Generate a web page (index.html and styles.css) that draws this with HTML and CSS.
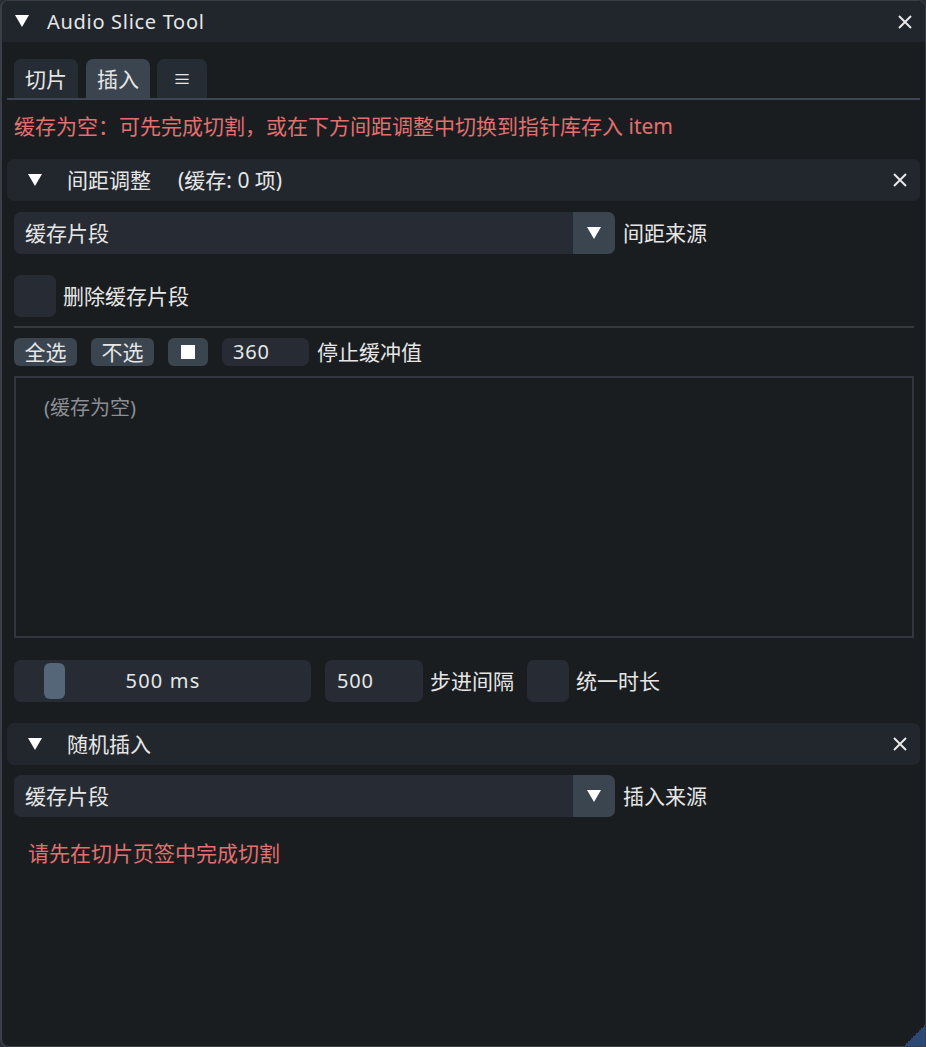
FILE: index.html
```html
<!DOCTYPE html>
<html>
<head>
<meta charset="utf-8">
<link rel="stylesheet" href="styles.css">
</head>
<body>
<div class="window">
  <div class="titlebar">
    <svg class="tri" width="14" height="12" viewBox="0 0 14 12"><polygon points="0,0 14,0 7,12" fill="#ffffff"/></svg>
    <span class="title">Audio Slice Tool</span>
    <svg class="close" width="14" height="14" viewBox="0 0 14 14"><path d="M1 1 L13 13 M13 1 L1 13" stroke="#e8e8e8" stroke-width="2"/></svg>
  </div>
  <div class="content">
    <div class="tabbar">
      <div class="tab">切片</div>
      <div class="tab active">插入</div>
      <div class="tab menu">≡</div>
    </div>
    <p class="warn top-warn">缓存为空：可先完成切割，或在下方间距调整中切换到指针库存入 item</p>

    <div class="header">
      <svg class="tri" width="14" height="12" viewBox="0 0 14 12"><polygon points="0,0 14,0 7,12" fill="#ffffff"/></svg>
      <span class="htext">间距调整</span>
      <span class="hnote">(缓存: 0 项)</span>
      <svg class="close" width="14" height="14" viewBox="0 0 14 14"><path d="M1 1 L13 13 M13 1 L1 13" stroke="#e8e8e8" stroke-width="2"/></svg>
    </div>

    <div class="row combo-row">
      <div class="combo">
        <span class="combo-text">缓存片段</span>
        <span class="combo-arrow"><svg width="14" height="12" viewBox="0 0 14 12"><polygon points="0,0 14,0 7,12" fill="#ffffff"/></svg></span>
      </div>
      <span class="label">间距来源</span>
    </div>

    <div class="row check-row">
      <div class="checkbox"></div>
      <span class="label">删除缓存片段</span>
    </div>

    <div class="separator"></div>

    <div class="row btn-row">
      <div class="btn">全选</div>
      <div class="btn">不选</div>
      <div class="btn square"><span class="sq"></span></div>
      <div class="input small">360</div>
      <span class="label">停止缓冲值</span>
    </div>

    <div class="listbox">
      <span class="placeholder">(缓存为空)</span>
    </div>

    <div class="row slider-row">
      <div class="slider">
        <span class="grab"></span>
        <span class="slider-text">500 ms</span>
      </div>
      <div class="input step">500</div>
      <span class="label">步进间隔</span>
      <div class="checkbox"></div>
      <span class="label">统一时长</span>
    </div>

    <div class="header header2">
      <svg class="tri" width="14" height="12" viewBox="0 0 14 12"><polygon points="0,0 14,0 7,12" fill="#ffffff"/></svg>
      <span class="htext">随机插入</span>
      <svg class="close" width="14" height="14" viewBox="0 0 14 14"><path d="M1 1 L13 13 M13 1 L1 13" stroke="#e8e8e8" stroke-width="2"/></svg>
    </div>

    <div class="row combo-row combo-row2">
      <div class="combo">
        <span class="combo-text">缓存片段</span>
        <span class="combo-arrow"><svg width="14" height="12" viewBox="0 0 14 12"><polygon points="0,0 14,0 7,12" fill="#ffffff"/></svg></span>
      </div>
      <span class="label">插入来源</span>
    </div>

    <p class="warn bottom-warn">请先在切片页签中完成切割</p>
  </div>
  <div class="grip"></div>
</div>
</body>
</html>
```

FILE: styles.css
```css
html, body {
  margin: 0;
  padding: 0;
  background: #2a2e35;
}

body {
  font-family: "Noto Sans", "Noto Sans CJK SC", sans-serif;
  font-size: 21px;
  line-height: 26px;
  color: #e6e6e6;
}

.window {
  position: relative;
  box-sizing: border-box;
  width: 926px;
  height: 1047px;
  background: #1a1d20;
  border: 1px solid #3a3f47;
  border-left-width: 2px;
  border-radius: 8px 8px 0 8px;
  overflow: hidden;
  display: flex;
  flex-direction: column;
}

.titlebar {
  height: 41px;
  flex: none;
  background: #21252c;
  display: flex;
  align-items: center;
  padding: 0 13px 0 13px;
}

.titlebar .tri {
  margin-right: 18px;
  margin-top: -1px;
}

.title {
  font-size: 20px;
  letter-spacing: 0.7px;
  flex: 1;
}

.content {
  flex: 1;
  display: flex;
  flex-direction: column;
  padding: 17px 11px 0 12px;
}

.tabbar {
  display: flex;
  gap: 8px;
  margin: 0 -6px 0 -7px;
  padding-left: 7px;
  border-bottom: 2px solid #3d4654;
  height: 39px;
}

.tab {
  width: 64px;
  box-sizing: border-box;
  height: 39px;
  background: #262c34;
  border-radius: 7px 7px 0 0;
  display: flex;
  align-items: center;
  justify-content: center;
}

.tab.active {
  background: #3a4550;
}

.tab.menu {
  width: 50px;
  margin-left: -1px;
  font-size: 18px;
}

.warn {
  margin: 0;
  color: #e36f6f;
}

.top-warn {
  margin-top: 13px;
  margin-bottom: 20px;
}

.header {
  height: 42px;
  margin: 0 -6px 0 -7px;
  background: #22262d;
  border-radius: 7px;
  display: flex;
  align-items: center;
  padding: 0 13px 0 21px;
}

.header .tri {
  margin-right: 25px;
}

.hnote {
  margin-left: 27px;
  flex: 1;
}

.header2 .htext {
  flex: 1;
}

.header2 {
  margin-top: 21px;
}

.row {
  display: flex;
  align-items: center;
}

.combo-row {
  margin-top: 11px;
}

.combo-row2 {
  margin-top: 10px;
}

.combo {
  width: 601px;
  height: 42px;
  background: #272c34;
  border-radius: 7px;
  display: flex;
  align-items: center;
  overflow: hidden;
}

.combo-text {
  flex: 1;
  padding-left: 11px;
}

.combo-arrow {
  width: 42px;
  height: 42px;
  background: #3a4550;
  display: flex;
  align-items: center;
  justify-content: center;
}

.label {
  margin-left: 8px;
  white-space: nowrap;
}

.check-row {
  margin-top: 21px;
}

.checkbox {
  width: 42px;
  height: 42px;
  background: #272c34;
  border-radius: 7px;
  flex: none;
}

.check-row .label {
  margin-left: 7px;
}

.separator {
  height: 2px;
  background: #353a42;
  margin-top: 9px;
}

.btn-row {
  margin-top: 10px;
  gap: 14px;
}

.btn-row .label {
  margin-left: -6px;
}

.btn {
  height: 28px;
  width: 63px;
  background: #3a4550;
  border-radius: 6px;
  display: flex;
  align-items: center;
  justify-content: center;
}

.btn.square {
  width: 40px;
}

.sq {
  width: 14px;
  height: 14px;
  background: #ffffff;
}

.input {
  background: #272c34;
  border-radius: 7px;
  display: flex;
  align-items: center;
  padding-left: 11px;
  box-sizing: border-box;
  letter-spacing: 0.8px;
  font-size: 20px;
}

.input.small {
  height: 28px;
  width: 87px;
}

.listbox {
  margin-top: 10px;
  height: 262px;
  box-sizing: border-box;
  border: 2px solid #32373f;
  padding: 16px 0 0 28px;
}

.placeholder {
  color: #8b8e92;
  font-size: 20px;
}

.slider-row {
  margin-top: 22px;
}

.slider {
  position: relative;
  width: 297px;
  height: 42px;
  background: #272c34;
  border-radius: 7px;
  display: flex;
  align-items: center;
  justify-content: center;
  flex: none;
}

.grab {
  position: absolute;
  left: 30px;
  top: 3px;
  width: 21px;
  height: 36px;
  background: #546678;
  border-radius: 6px;
}

.slider-text {
  font-size: 20px;
  letter-spacing: 1.2px;
  margin-left: 1px;
}

.input.step {
  margin-left: 14px;
  width: 98px;
  height: 42px;
  padding-left: 12px;
}

.slider-row .checkbox {
  margin-left: 13px;
}

.slider-row .label {
  margin-left: 7px;
}

.slider-row .checkbox + .label {
  margin-left: 7px;
}

.bottom-warn {
  margin-top: 23px;
  padding-left: 14px;
}

.grip {
  position: absolute;
  right: 0;
  bottom: 0;
  width: 21px;
  height: 21px;
  background: linear-gradient(135deg, transparent 50%, #2c4874 50%);
}
```
